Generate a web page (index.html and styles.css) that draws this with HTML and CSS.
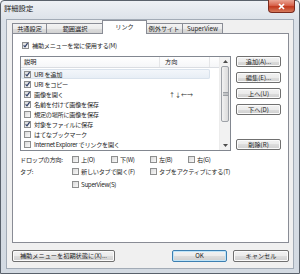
FILE: index.html
```html
<!DOCTYPE html>
<html lang="ja">
<head>
    <meta charset="UTF-8">
    <title>詳細設定</title>
    <link rel="stylesheet" href="styles.css">
</head>
<body>
    <div class="window">
        <div class="titlebar">
            <span class="title">詳細設定</span>
            <span class="close-btn">
                <svg width="9" height="7" viewBox="0 0 9 7"><path d="M2 1 L7 6 M7 1 L2 6" stroke="#fff" stroke-width="1.7"/></svg>
            </span>
        </div>
        <div class="client">
            <div class="tabs">
                <div class="tab t1">共通設定</div>
                <div class="tab t2">範囲選択</div>
                <div class="tab t3 active">リンク</div>
                <div class="tab t4">例外サイト</div>
                <div class="tab t5">SuperView</div>
            </div>
            <div class="panel">
                <div class="check always">
                    <span class="box on"><svg viewBox="0 0 5 5"><path d="M0.6 2.4 L2 3.9 L4.6 0.2"/></svg></span>補助メニューを常に使用する(M)
                </div>

                <div class="list-area">
                    <div class="listview">
                        <div class="lv-main">
                            <div class="lv-header">
                                <span class="hd-desc">説明</span>
                                <span class="hd-dir">方向</span>
                                <span class="hd-fill"></span>
                            </div>
                            <div class="lv-rows">
                                <div class="lv-row selected">
                                    <span class="box on"><svg viewBox="0 0 5 5"><path d="M0.6 2.4 L2 3.9 L4.6 0.2"/></svg></span>
                                    <span class="row-desc">URI を追加</span>
                                </div>
                                <div class="lv-row">
                                    <span class="box on"><svg viewBox="0 0 5 5"><path d="M0.6 2.4 L2 3.9 L4.6 0.2"/></svg></span>
                                    <span class="row-desc">URI をコピー</span>
                                </div>
                                <div class="lv-row">
                                    <span class="box on"><svg viewBox="0 0 5 5"><path d="M0.6 2.4 L2 3.9 L4.6 0.2"/></svg></span>
                                    <span class="row-desc">画像を開く</span>
                                    <span class="row-dir">↑↓←→</span>
                                </div>
                                <div class="lv-row">
                                    <span class="box on"><svg viewBox="0 0 5 5"><path d="M0.6 2.4 L2 3.9 L4.6 0.2"/></svg></span>
                                    <span class="row-desc">名前を付けて画像を保存</span>
                                </div>
                                <div class="lv-row">
                                    <span class="box"></span>
                                    <span class="row-desc">規定の場所に画像を保存</span>
                                </div>
                                <div class="lv-row">
                                    <span class="box on"><svg viewBox="0 0 5 5"><path d="M0.6 2.4 L2 3.9 L4.6 0.2"/></svg></span>
                                    <span class="row-desc">対象をファイルに保存</span>
                                </div>
                                <div class="lv-row">
                                    <span class="box"></span>
                                    <span class="row-desc">はてなブックマーク</span>
                                </div>
                                <div class="lv-row">
                                    <span class="box"></span>
                                    <span class="row-desc">Internet Explorer でリンクを開く</span>
                                </div>
                            </div>
                        </div>
                        <div class="scrollbar">
                            <div class="sb-arrow"><svg width="5" height="3" viewBox="0 0 5 3"><path d="M0 3 L2.5 0 L5 3 Z" fill="#4d4d4d"/></svg></div>
                            <div class="sb-thumb"><svg width="5" height="4" viewBox="0 0 5 4"><path d="M0 0.5 H5 M0 2 H5 M0 3.5 H5" stroke="#8a8f96" stroke-width="0.8"/></svg></div>
                            <div class="sb-track"></div>
                            <div class="sb-arrow"><svg width="5" height="3" viewBox="0 0 5 3"><path d="M0 0 L2.5 3 L5 0 Z" fill="#4d4d4d"/></svg></div>
                        </div>
                    </div>
                    <div class="side-buttons">
                        <button class="btn">追加(A)...</button>
                        <button class="btn">編集(E)...</button>
                        <button class="btn">上へ(U)</button>
                        <button class="btn">下へ(D)</button>
                        <button class="btn btn-del">削除(R)</button>
                    </div>
                </div>

                <!-- ドロップ方向とタブの設定 -->
                <div class="options">
                    <span class="opt-label">ドロップの方向:</span>
                    <div class="check"><span class="box"></span>上(O)</div>
                    <div class="check"><span class="box"></span>下(W)</div>
                    <div class="check"><span class="box"></span>左(B)</div>
                    <div class="check"><span class="box"></span>右(G)</div>

                    <span class="opt-label">タブ:</span>
                    <div class="check span2"><span class="box"></span>新しいタブで開く(F)</div>
                    <div class="check span2"><span class="box"></span>タブをアクティブにする(T)</div>

                    <span class="opt-label"></span>
                    <div class="check span4"><span class="box"></span>SuperView(S)</div>
                </div>
            </div>

            <div class="footer">
                <button class="btn btn-reset">補助メニューを初期状態に(X)...</button>
                <button class="btn btn-ok">OK</button>
                <button class="btn btn-cancel">キャンセル</button>
            </div>
        </div>
    </div>
</body>
</html>
```

FILE: styles.css
```css
body {
    margin: 0;
    font-family: "Noto Sans CJK JP", "Noto Sans", sans-serif;
    font-size: 6.2px;
    color: #1e1e1e;
    background: #fff;
}
.window {
    width: 300px;
    height: 274px;
    box-sizing: border-box;
    border: 1px solid #59616b;
    border-radius: 4px 4px 0 0;
    background: linear-gradient(#eef1f5, #dbe1e8 20px, #d3dae2);
}
.titlebar {
    display: flex;
    height: 18px;
}
.title {
    padding: 3px 0 0 3px;
    font-size: 7.3px;
    line-height: 9px;
}
.close-btn {
    margin-left: auto;
    margin-right: 4px;
    margin-top: -1px;
    width: 27px;
    height: 13px;
    box-sizing: border-box;
    border: 1px solid #7a2a1e;
    border-top: none;
    border-radius: 0 0 4px 4px;
    background: linear-gradient(#eaa493, #d8644d 45%, #c2391e 55%, #d67a5c);
    display: flex;
    align-items: center;
    justify-content: center;
}
.client {
    margin: 0 5px;
    height: 250px;
    box-sizing: border-box;
    border: 1px solid #a2abb6;
    background: #f0f0f0;
    padding: 0 4px 6px 5px;
}

/* タブ */
.tabs {
    display: flex;
    align-items: flex-end;
    height: 13px;
}
.tab {
    height: 10px;
    box-sizing: border-box;
    border: 1px solid #898c95;
    border-bottom: none;
    background: linear-gradient(#f3f3f3, #ebebeb 50%, #dedede 50%, #d2d2d2);
    text-align: center;
    line-height: 9px;
    white-space: nowrap;
}
.t1 { width: 35px; }
.t2 { width: 58px; margin-left: -1px; }
.t3 { width: 45px; margin-left: -2px; }
.t4 { width: 38px; margin-left: -2px; }
.t5 { width: 41px; margin-left: -1px; }
.tab.active {
    height: 14px;
    margin-bottom: -1px;
    background: #fff;
    position: relative;
    z-index: 1;
    line-height: 12px;
}
.panel {
    height: 210px;
    box-sizing: border-box;
    border: 1px solid #898c95;
    background: #fff;
    padding: 6px 0 0 7px;
}

/* チェックボックス */
.check {
    display: flex;
    align-items: center;
    height: 10px;
    white-space: nowrap;
    letter-spacing: -0.3px;
}
.box {
    width: 7px;
    height: 7px;
    box-sizing: border-box;
    border: 1px solid #8e8f8f;
    background: linear-gradient(135deg, #d9d9d9, #f9f9f9);
    margin-right: 3px;
    flex: none;
}
.box svg {
    display: block;
    width: 5px;
    height: 5px;
    overflow: visible;
}
.box svg path {
    fill: none;
    stroke: #2f3f66;
    stroke-width: 1.2;
}
.always {
    margin-left: 2px;
}

/* リスト */
.list-area {
    display: flex;
    margin-top: 6px;
}
.listview {
    width: 211px;
    height: 95px;
    box-sizing: border-box;
    border: 1px solid #828790;
    display: flex;
}
.lv-main {
    flex: 1;
}
.lv-header {
    display: flex;
    height: 11px;
    box-sizing: border-box;
    border-bottom: 1px solid #dadde2;
    background: linear-gradient(#fff, #f5f6f8);
    line-height: 10px;
}
.hd-desc {
    width: 139px;
    padding-left: 3px;
    box-sizing: border-box;
    border-right: 1px solid #e5e6e8;
}
.hd-dir {
    width: 50px;
    padding-left: 5px;
    box-sizing: border-box;
    border-right: 1px solid #e5e6e8;
}
.hd-fill {
    flex: 1;
}
.lv-rows {
    padding-top: 1px;
}
.lv-row {
    display: flex;
    align-items: center;
    width: 189px;
    height: 10px;
    white-space: nowrap;
    letter-spacing: -0.3px;
}
.lv-row .box {
    margin-left: 3px;
}
.lv-row.selected {
    background: linear-gradient(#f4f7fb, #e6edf5);
    box-shadow: inset 0 0 0 1px #d9e2ec;
    border-radius: 2px;
}
.row-desc {
    width: 135px;
}
.row-dir {
    letter-spacing: 0;
    font-size: 6px;
}
.scrollbar {
    width: 11px;
    display: flex;
    flex-direction: column;
    background: #f2f2f2;
    border-left: 1px solid #ececec;
    box-sizing: border-box;
}
.sb-arrow {
    height: 9px;
    display: flex;
    align-items: center;
    justify-content: center;
}
.sb-thumb {
    height: 56px;
    margin: 0 1px;
    box-sizing: border-box;
    border: 1px solid #9ea2a8;
    border-radius: 2px;
    background: linear-gradient(90deg, #f3f3f3, #e6e6e6 50%, #dcdcdc);
    display: flex;
    align-items: center;
    justify-content: center;
}
.sb-track {
    flex: 1;
}

/* ボタン */
.btn {
    box-sizing: border-box;
    height: 11px;
    padding: 0;
    border: 1px solid #707070;
    border-radius: 2px;
    background: linear-gradient(#f2f2f2, #ebebeb 50%, #dddddd 50%, #cfcfcf);
    font-family: inherit;
    font-size: 6.2px;
    line-height: 9px;
    color: #1e1e1e;
    box-shadow: inset 0 0 0 1px #fbfbfb;
    white-space: nowrap;
}
.side-buttons {
    display: flex;
    flex-direction: column;
    gap: 5px;
    margin-left: 5px;
    width: 45px;
    height: 94px;
}
.btn-del {
    margin-top: auto;
}

/* オプション */
.options {
    display: grid;
    grid-template-columns: 52px 39px 39px 38px 1fr;
    grid-auto-rows: 12.5px;
    align-items: center;
    margin-top: 2px;
    letter-spacing: -0.3px;
}
.options .box {
    margin-right: 2px;
}
.span2 {
    grid-column: span 2;
}
.span4 {
    grid-column: span 4;
}
.footer {
    display: flex;
    gap: 6px;
    margin-top: 7px;
}
.footer .btn {
    height: 12px;
    line-height: 10px;
}
.btn-reset {
    width: 103px;
}
.btn-ok {
    width: 55px;
    margin-left: auto;
    border-color: #3c7fb1;
    box-shadow: inset 0 0 0 1px #bfe4f8;
}
.btn-cancel {
    width: 56px;
}
```
